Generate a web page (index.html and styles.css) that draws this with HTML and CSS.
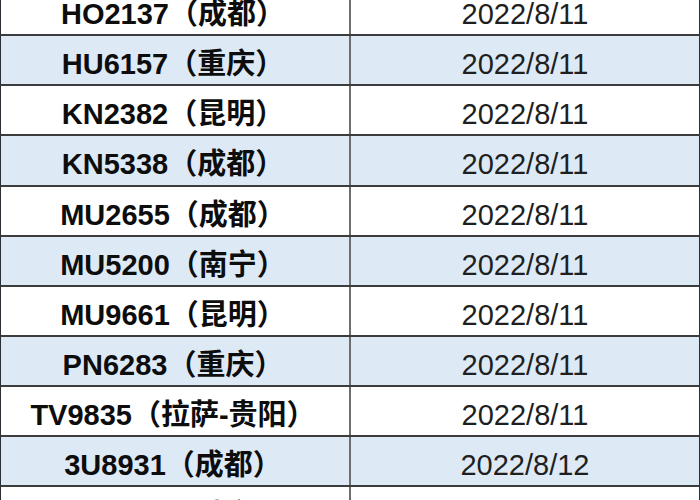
FILE: index.html
```html
<!DOCTYPE html>
<html lang="zh-CN">
<head>
<meta charset="utf-8">
<title>航班表</title>
<link rel="stylesheet" href="styles.css">
</head>
<body>
<div class="viewport">
  <div class="sheet">
    <div class="row"><div class="cell flight">HO2137（成都）</div><div class="cell date">2022/8/11</div></div>
    <div class="row alt"><div class="cell flight">HU6157（重庆）</div><div class="cell date">2022/8/11</div></div>
    <div class="row"><div class="cell flight">KN2382（昆明）</div><div class="cell date">2022/8/11</div></div>
    <div class="row alt"><div class="cell flight">KN5338（成都）</div><div class="cell date">2022/8/11</div></div>
    <div class="row"><div class="cell flight">MU2655（成都）</div><div class="cell date">2022/8/11</div></div>
    <div class="row alt"><div class="cell flight">MU5200（南宁）</div><div class="cell date">2022/8/11</div></div>
    <div class="row"><div class="cell flight">MU9661（昆明）</div><div class="cell date">2022/8/11</div></div>
    <div class="row alt"><div class="cell flight">PN6283（重庆）</div><div class="cell date">2022/8/11</div></div>
    <div class="row"><div class="cell flight">TV9835（拉萨-贵阳）</div><div class="cell date">2022/8/11</div></div>
    <div class="row alt"><div class="cell flight">3U8931（成都）</div><div class="cell date">2022/8/12</div></div>
    <div class="row"><div class="cell flight">3U8955（重庆）</div><div class="cell date">2022/8/12</div></div>
  </div>
</div>
</body>
</html>
```

FILE: styles.css
```css
html, body {
  margin: 0;
  padding: 0;
  background: #ffffff;
}

.viewport {
  width: 700px;
  height: 500px;
  overflow: hidden;
}

.sheet {
  width: 700px;
  margin-top: -14px;
}

.row {
  box-sizing: border-box;
  display: grid;
  grid-template-columns: 350px 348px;
  height: 50.15px;
  border-left: 1px solid #2a2f36;
  border-right: 1px solid #2a2f36;
  border-bottom: 2px solid #3c3c3c;
  background: #ffffff;
}

.row.alt {
  background: #ddeaf6;
}

.cell {
  box-sizing: border-box;
  padding-top: 8px;
  line-height: 40px;
  font-size: 29px;
  text-align: center;
  white-space: nowrap;
  font-family: "Liberation Sans", "Noto Sans CJK SC", sans-serif;
}

.flight {
  border-right: 2px solid #6e6e6e;
  font-weight: bold;
  color: #0d0d0d;
  padding-right: 4px;
}

.date {
  font-weight: normal;
  color: #1f1f1f;
}
```
